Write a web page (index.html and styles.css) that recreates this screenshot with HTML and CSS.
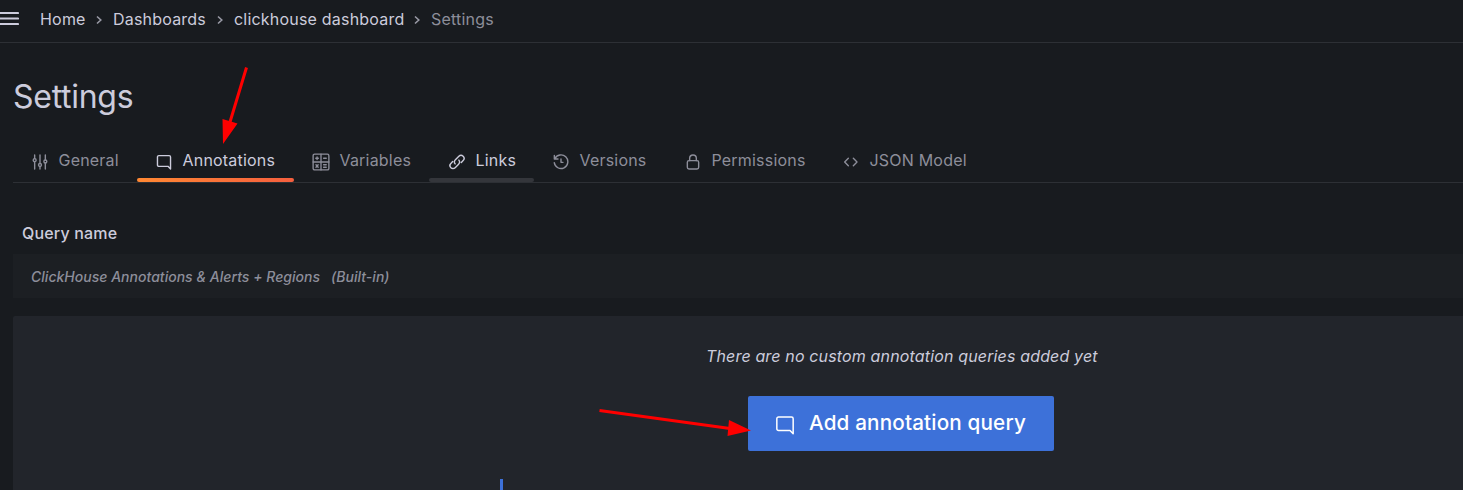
FILE: index.html
```html
<!DOCTYPE html>
<html lang="en">
<head>
<meta charset="utf-8">
<title>Settings - clickhouse dashboard</title>
<link rel="stylesheet" href="styles.css">
</head>
<body>
<svg class="defs" width="0" height="0">
  <symbol id="comment" viewBox="0 0 24 24"><path d="M21.800 22.500 18 18.500H4.200A2 2 0 0 1 2.200 16.500V4.500A2 2 0 0 1 4.200 2.500H19.800A2 2 0 0 1 21.800 4.500Z"/></symbol>
  <symbol id="chevron" viewBox="0 0 8 12"><path d="M2 2.500 5.800 6 2 9.500"/></symbol>
</svg>
<header class="topbar">
  <svg class="menu" width="19" height="20" viewBox="0 0 19 20"><path d="M-2 4H18M-2 9.500H18M-2 15H18"/></svg>
  <nav class="crumbs">
    <a class="crumb crumb-home">Home</a><svg class="chevron"><use href="#chevron"/></svg>
    <a class="crumb crumb-dashboards">Dashboards</a><svg class="chevron"><use href="#chevron"/></svg>
    <a class="crumb crumb-dashboard">clickhouse dashboard</a><svg class="chevron"><use href="#chevron"/></svg>
    <span class="crumb muted">Settings</span>
  </nav>
</header>
<main class="page">
  <h1 class="title">Settings</h1>
  <nav class="tabs">
    <a class="tab tab-general"><svg class="icon" viewBox="0 0 24 24"><path d="M4 1.500V7M4 11.500V22.500M12 1.500V14M12 19V22.500M20 1.500V9M20 13.500V22.500"/><circle cx="4" cy="9.200" r="2.200"/><circle cx="12" cy="16.500" r="2.200"/><circle cx="20" cy="11.200" r="2.200"/></svg>General</a>
    <a class="tab tab-annotations active"><svg class="icon"><use href="#comment"/></svg>Annotations</a>
    <a class="tab tab-variables"><svg class="icon icon-calc" viewBox="0 0 24 24"><rect x="1.500" y="1.500" width="21" height="21" rx="2"/><path d="M12 1.500V22.500M1.500 12H22.500M5 7H8.500M6.750 5.250V8.750M15.500 7H19M5.300 15.700 8.200 19M8.200 15.700 5.300 19M15.500 15.700H19M15.500 19H19"/></svg>Variables</a>
    <a class="tab tab-links hover"><svg class="icon" viewBox="0 0 24 24"><path d="M9.200 14.800A4.600 4.600 0 0 1 9.600 8.700L14.800 3.500A4.500 4.500 0 0 1 21.200 9.900L18.500 12.600M14.800 9.200A4.600 4.600 0 0 1 14.400 15.300L9.200 20.500A4.500 4.500 0 0 1 2.800 14.100L5.500 11.400"/></svg>Links</a>
    <a class="tab tab-versions"><svg class="icon" viewBox="0 0 24 24"><path d="M2 2V7.500H7.500M2.800 7.200A10.200 10.200 0 1 1 1.900 13M12 7.500V12.500H15"/></svg>Versions</a>
    <a class="tab tab-permissions"><svg class="icon" viewBox="0 0 24 24"><rect x="3.500" y="10" width="17" height="12.500" rx="2.500"/><path d="M7 10V6.500A5 5 0 0 1 17 6.500V10"/></svg>Permissions</a>
    <a class="tab tab-json"><svg class="icon" viewBox="0 0 24 24"><path d="M8 6.500 2.500 12 8 17.500M15.500 6.500 21 12 15.500 17.500"/></svg>JSON Model</a>
  </nav>
  <section class="queries">
    <div class="table-head">Query name</div>
    <div class="table-row"><em>ClickHouse Annotations &amp; Alerts + Regions</em><em>(Built-in)</em></div>
  </section>
  <section class="empty">
    <p class="empty-text">There are no custom annotation queries added yet</p>
    <button class="add"><svg class="icon"><use href="#comment"/></svg><span>Add annotation query</span></button>
    <div class="info-edge"></div>
  </section>
</main>
<svg class="arrows" width="1463" height="490" viewBox="0 0 1463 490">
  <path class="shaft" d="M246.500 67.500 230 122M599.500 410.500 730 428.500"/>
  <path class="head" d="M222.500 119 237.500 123.500 223 144ZM729 420 751 430.500 727.500 436Z"/>
</svg>
</body>
</html>
```
FILE: styles.css
```css
* { box-sizing: border-box; }
body {
  margin: 0;
  height: 490px;
  overflow: hidden;
  background: #181b1f;
  color: #ccccdc;
  font: 400 16px/24px Inter, "Liberation Sans", sans-serif;
  letter-spacing: 0.2px;
}
.defs { display: block; }
svg { flex: none; fill: none; stroke: currentColor; }
.topbar {
  display: flex;
  height: 43px;
  padding-bottom: 4px;
  align-items: center;
  border-bottom: 1px solid #2d3035;
}
.menu { stroke-width: 2.200; stroke-linecap: round; margin-right: 21px; }
.crumbs { display: flex; align-items: center; }
.crumb { white-space: nowrap; }
.crumb-home { width: 46px; }
.crumb-dashboards { width: 94px; }
.crumb-dashboard { width: 170px; }
.chevron { width: 8px; height: 12px; margin: 1px 10px 0 9px; stroke-width: 1.6; color: #9899a5; }
.muted { color: #8d8e9a; }
.page { padding-left: 13px; }
.title {
  margin: 35px 0 29px;
  font-size: 32px;
  line-height: 38px;
  font-weight: 400;
  letter-spacing: -0.28px;
}
.tabs { display: flex; height: 38px; border-bottom: 1px solid #2d3035; }
.tab {
  display: flex;
  position: relative;
  height: 38px;
  padding: 0 0 9px 19px;
  align-items: center;
  gap: 10.500px;
  color: #8d8e9a;
  white-space: nowrap;
}
.tab-general { width: 124px; }
.tab-annotations { width: 157px; }
.tab-variables { width: 135px; }
.tab-links { width: 105px; padding-left: 20px; }
.tab-versions { width: 132px; }
.tab-permissions { width: 157px; }
.tab-json { width: 162px; padding-left: 20px; }
.icon { width: 16px; height: 16px; margin-top: 4px; stroke-width: 2.1; stroke-linecap: round; stroke-linejoin: round; }
.tab .icon-calc { width: 18px; height: 18px; margin-left: -1px; margin-right: -1px; stroke-width: 1.8; }
.active, .hover { color: #ccccdc; }
.active::after, .hover::after {
  content: "";
  position: absolute;
  left: 0;
  right: 0;
  bottom: 1px;
  height: 4px;
  border-radius: 2px;
  background: #34363b;
}
.active::after { background: linear-gradient(90deg, #ff8833, #f55f3e); }
.queries { padding-top: 29px; }
.table-head { height: 42px; padding: 8px 9px 0; font-weight: 500; line-height: 26px; letter-spacing: 0.17px; }
.table-row {
  display: flex;
  height: 44px;
  padding: 2px 0 0 18px;
  align-items: center;
  gap: 11px;
  background: #1c1f23;
  color: #8d8e9a;
  font-size: 14px;
  font-weight: 500;
  letter-spacing: 0.02px;
}
.empty {
  display: flex;
  flex-direction: column;
  height: 174px;
  margin-top: 18px;
  padding-top: 28px;
  background: #22252b;
  border-radius: 2px 0 0 0;
}
.empty-text { width: 394px; margin: 0 0 0 693px; font-style: italic; white-space: nowrap; letter-spacing: 0.15px; }
.add {
  display: flex;
  flex: none;
  width: 306px;
  height: 55px;
  margin: 28px 0 0 735px;
  padding: 0 0 1px 27px;
  align-items: center;
  gap: 14px;
  border: 0;
  border-radius: 2px;
  background: #3d71d9;
  color: #fff;
  font: 500 20.700px/30px Inter, "Liberation Sans", sans-serif;
  letter-spacing: 0.15px;
  white-space: nowrap;
}
.add .icon { width: 20px; height: 20px; margin: 3px 0 0; stroke-width: 1.8; }
.info-edge { flex: none; width: 3px; height: 11px; margin: 28px 0 0 487px; background: #3d71d9; }
.arrows { position: absolute; left: 0; top: 0; pointer-events: none; }
.shaft { stroke: #f00; stroke-width: 3; }
.head { fill: #f00; stroke: none; }
```
